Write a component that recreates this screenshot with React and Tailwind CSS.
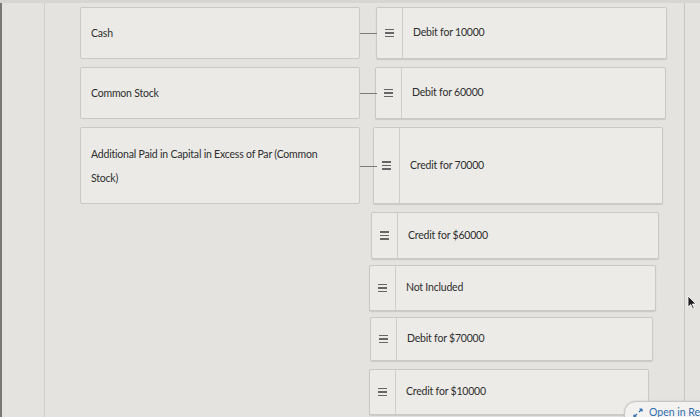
import React from 'react';

const rows = [
  { left: 'Cash', right: 'Debit for 10000', h: 'h-[52px] mt-[4px]', rw: 'ml-[16px] w-[291px]' },
  { left: 'Common Stock', right: 'Debit for 60000', h: 'h-[52px] mt-[8px]', rw: 'ml-[15px] w-[291px]' },
  {
    left: 'Additional Paid in Capital in Excess of Par (Common Stock)',
    right: 'Credit for 70000',
    h: 'h-[77px] mt-[8px]',
    rw: 'ml-[13px] w-[290px]',
  },
  { right: 'Credit for $60000', h: 'h-[47px] mt-[8px]', rw: 'ml-[291px] w-[288px]' },
  { right: 'Not Included', h: 'h-[46px] mt-[6px]', rw: 'ml-[289px] w-[287px]' },
  { right: 'Debit for $70000', h: 'h-[44px] mt-[6px]', rw: 'ml-[290px] w-[283px]' },
  { right: 'Credit for $10000', h: 'h-[46px] mt-[8px]', rw: 'ml-[289px] w-[280px]' },
];

function Handle() {
  return (
    <div className="w-[26px] shrink-0 border-r border-[#cfcdca] flex items-center justify-center">
      <div className="flex flex-col gap-[2px]">
        <span className="block w-[9px] h-[1.5px] bg-[#666]" />
        <span className="block w-[9px] h-[1.5px] bg-[#666]" />
        <span className="block w-[9px] h-[1.5px] bg-[#666]" />
      </div>
    </div>
  );
}

export default function App() {
  return (
    <div
      className="relative w-[700px] h-[417px] overflow-hidden bg-[#e5e3e0] text-[#2e2e2e] border-t-[3px] border-[#d8d6d3]"
      style={{ fontFamily: 'Lato, "Open Sans", sans-serif' }}
    >
      <div className="absolute left-0 top-0 bottom-0 w-[2px] bg-[#7a7876]" />
      <div className="flex h-full">
        <div className="w-[45px] shrink-0 border-r border-[#d0cecb]" />
        <div className="w-[640px] shrink-0 border-r border-[#c8c6c3] flex flex-col pl-[35px]">
          {rows.map((r, i) => (
            <div key={i} className={`flex shrink-0 ${r.h}`}>
              {r.left && (
                <div className="w-[280px] shrink-0 flex items-center bg-[#ebeae7] border border-[#cbc9c6] rounded-[2px] pl-[10px] pr-[30px]">
                  <span className="text-[10.5px] leading-[24px] tracking-[-0.2px]">{r.left}</span>
                </div>
              )}
              {r.left && (
                <div className="relative">
                  <div className="absolute left-0 top-1/2 w-[17px] h-px bg-[#7d7b79]" />
                </div>
              )}
              <div className={`flex shrink-0 bg-[#ecebe8] border border-[#cbc9c6] rounded-[2px] shadow-[0_1px_1px_rgba(0,0,0,0.12)] ${r.rw}`}>
                <Handle />
                <div className="flex items-center pl-[10px] text-[10.5px] tracking-[-0.2px]">{r.right}</div>
              </div>
            </div>
          ))}
        </div>
        <div className="flex-1" />
      </div>

      <svg className="absolute left-[687px] top-[292px]" width="10" height="16" viewBox="0 0 10 16">
        <path d="M1 1 L1 12 L3.8 9.6 L5.8 14 L7.2 13.3 L5.3 9 L9 9 Z" fill="#222" stroke="#fff" strokeWidth="0.8" />
      </svg>

      <div className="absolute left-[624px] top-[398px] h-[24px] pl-[8px] pr-[4px] flex items-center gap-[6px] bg-[#f3f2f0] border border-[#c9c7c4] rounded-tl-[12px] rounded-tr-[12px] shadow-[0_0_2px_rgba(0,0,0,0.15)] whitespace-nowrap">
        <svg width="10" height="10" viewBox="0 0 10 10" fill="none" stroke="#2f6db0" strokeWidth="1.2">
          <path d="M1 9 L4 6 M1 9 L1 6.5 M1 9 L3.5 9" />
          <path d="M9 1 L6 4 M9 1 L9 3.5 M9 1 L6.5 1" />
        </svg>
        <span className="text-[10.5px] text-[#2f6db0]">Open in Reader</span>
      </div>
    </div>
  );
}
